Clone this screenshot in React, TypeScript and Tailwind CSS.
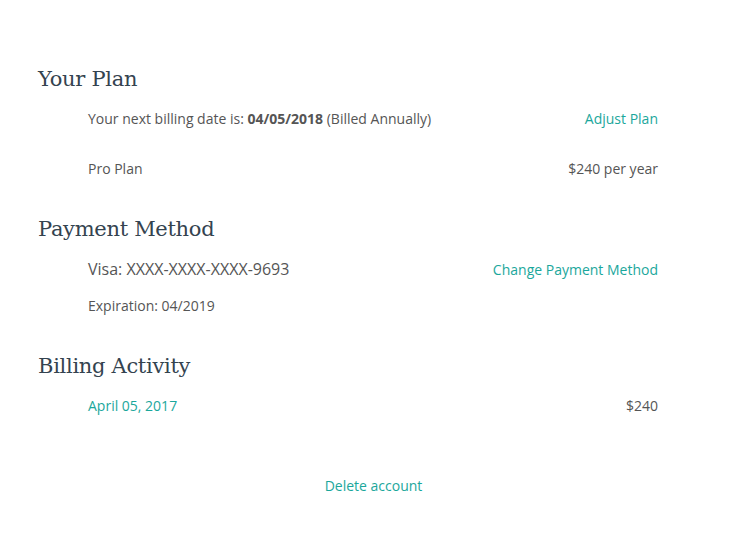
export default function App() {
  const heading =
    "pt-px text-[21px] leading-[30px] text-[#34434f] font-['DejaVu_Serif',serif] tracking-[-0.3px]";
  const link = "text-[#1ba79c]";

  return (
    <div className="min-h-[540px] w-full bg-white px-[38px] pt-[63px] font-['Open_Sans',sans-serif] text-[14px] text-[#555]">
      <section>
        <h2 className={heading}>Your Plan</h2>
        <div className="mt-[15px] pl-[50px] pr-[51px]">
          <div className="flex h-5 items-center justify-between leading-5">
            <p>
              Your next billing date is: <span className="font-bold">04/05/2018</span> (Billed
              Annually)
            </p>
            <a className={link}>Adjust Plan</a>
          </div>
          <div className="mt-[30px] flex h-5 items-center justify-between leading-5">
            <p>Pro Plan</p>
            <p>$240 per year</p>
          </div>
        </div>
      </section>

      <section className="mt-[34px]">
        <h2 className={heading}>Payment Method</h2>
        <div className="mt-[14px] pl-[50px] pr-[51px]">
          <div className="flex h-[22px] items-center justify-between">
            <p className="text-[16px] leading-[22px]">Visa: XXXX-XXXX-XXXX-9693</p>
            <a className={link}>Change Payment Method</a>
          </div>
          <p className="mt-4 h-5 leading-5">Expiration: 04/2019</p>
        </div>
      </section>

      <section className="mt-[34px]">
        <h2 className={heading}>Billing Activity</h2>
        <div className="mt-[15px] pl-[50px] pr-[51px]">
          <div className="flex h-5 items-center justify-between leading-5">
            <a className={link}>April 05, 2017</a>
            <p>$240</p>
          </div>
        </div>
      </section>

      <div className="mt-[60px] flex h-5 justify-center leading-5">
        <a className={link}>Delete account</a>
      </div>
    </div>
  );
}
